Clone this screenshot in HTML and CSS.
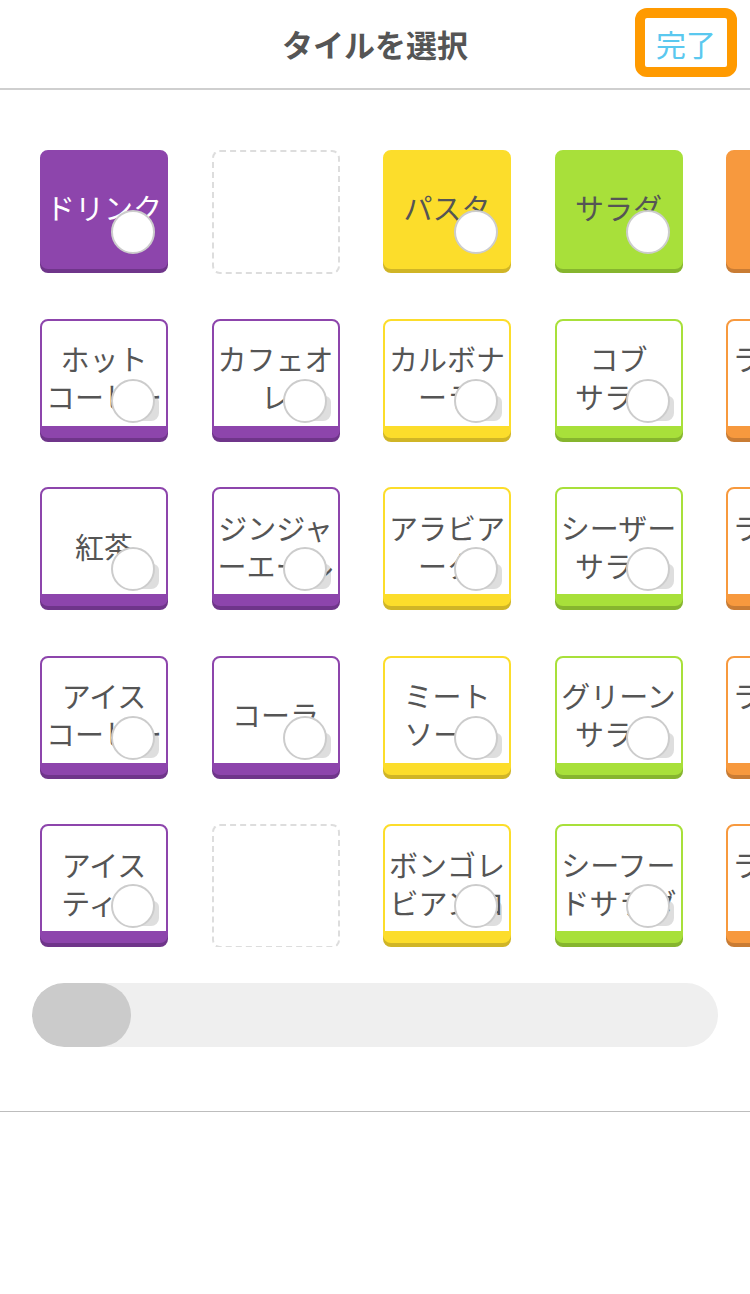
FILE: index.html
```html
<!DOCTYPE html>
<html lang="ja">

<head>
    <meta charset="UTF-8">
    <meta name="viewport" content="width=device-width, initial-scale=1.0">
    <title>タイルを選択</title>
    <link rel="stylesheet" href="styles.css">
</head>

<body>
    <header class="header">
        <div></div>
        <h1 class="title">タイルを選択</h1>
        <button class="done">完了</button>
    </header>
    <main class="picker">
        <div class="board">
            <!-- row 1: categories -->
            <div class="tile purple solid light"><span class="label">ドリンク</span><span class="knob"></span></div>
            <div class="slot"></div>
            <div class="tile yellow solid"><span class="label">パスタ</span><span class="knob"></span></div>
            <div class="tile green solid"><span class="label">サラダ</span><span class="knob"></span></div>
            <div class="tile orange solid light"><span class="label">ライス</span><span class="knob"></span></div>

            <!-- row 2 -->
            <div class="tile purple"><span class="knob-shadow"></span><span class="label">ホット<br>コーヒー</span><span class="knob"></span></div>
            <div class="tile purple"><span class="knob-shadow"></span><span class="label">カフェオ<br>レ</span><span class="knob"></span></div>
            <div class="tile yellow"><span class="knob-shadow"></span><span class="label">カルボナ<br>ーラ</span><span class="knob"></span></div>
            <div class="tile green"><span class="knob-shadow"></span><span class="label">コブ<br>サラダ</span><span class="knob"></span></div>
            <div class="tile orange"><span class="knob-shadow"></span><span class="label">ライス大<br>盛り</span><span class="knob"></span></div>

            <!-- row 3 -->
            <div class="tile purple"><span class="knob-shadow"></span><span class="label">紅茶</span><span class="knob"></span></div>
            <div class="tile purple"><span class="knob-shadow"></span><span class="label">ジンジャ<br>ーエール</span><span class="knob"></span></div>
            <div class="tile yellow"><span class="knob-shadow"></span><span class="label">アラビア<br>ータ</span><span class="knob"></span></div>
            <div class="tile green"><span class="knob-shadow"></span><span class="label">シーザー<br>サラダ</span><span class="knob"></span></div>
            <div class="tile orange"><span class="knob-shadow"></span><span class="label">ライス小<br>盛り</span><span class="knob"></span></div>

            <!-- row 4 -->
            <div class="tile purple"><span class="knob-shadow"></span><span class="label">アイス<br>コーヒー</span><span class="knob"></span></div>
            <div class="tile purple"><span class="knob-shadow"></span><span class="label">コーラ</span><span class="knob"></span></div>
            <div class="tile yellow"><span class="knob-shadow"></span><span class="label">ミート<br>ソース</span><span class="knob"></span></div>
            <div class="tile green"><span class="knob-shadow"></span><span class="label">グリーン<br>サラダ</span><span class="knob"></span></div>
            <div class="tile orange"><span class="knob-shadow"></span><span class="label">ライス普<br>通</span><span class="knob"></span></div>

            <!-- row 5 -->
            <div class="tile purple"><span class="knob-shadow"></span><span class="label">アイス<br>ティー</span><span class="knob"></span></div>
            <div class="slot"></div>
            <div class="tile yellow"><span class="knob-shadow"></span><span class="label">ボンゴレ<br>ビアンコ</span><span class="knob"></span></div>
            <div class="tile green"><span class="knob-shadow"></span><span class="label">シーフー<br>ドサラダ</span><span class="knob"></span></div>
            <div class="tile orange"><span class="knob-shadow"></span><span class="label">ラージサ<br>イズ</span><span class="knob"></span></div>
        </div>

        <div class="scrollbar">
            <div class="thumb"></div>
        </div>
    </main>
    <div class="footer-line"></div>
</body>

</html>
```

FILE: styles.css
```css
body {
    font-family: "Noto Sans CJK JP", "Noto Sans", sans-serif;
    margin: 0;
    padding: 0;
    background-color: #fff;
    color: #555;
    overflow: hidden;
}

.header {
    display: grid;
    grid-template-columns: 1fr auto 1fr;
    align-items: center;
    height: 88px;
    border-bottom: 2px solid #cfcfcf;
}

.title {
    margin: 0 0 2px 0;
    font-size: 31px;
    font-weight: bold;
    color: #555;
}

.done {
    justify-self: end;
    align-self: start;
    margin: 8px 13px 0 0;
    width: 102px;
    height: 69px;
    box-sizing: border-box;
    border: 10px solid #ff9a00;
    border-radius: 12px;
    background-color: #fff;
    color: #5ac8ef;
    font-family: inherit;
    font-size: 30px;
    padding: 0;
    line-height: 1;
}

.picker {
    padding-top: 60px;
}

.board {
    display: grid;
    grid-template-columns: repeat(5, 128px);
    grid-auto-rows: 123px;
    column-gap: 43.5px;
    row-gap: 45.5px;
    padding-left: 40px;
    overflow: hidden;
}

.tile {
    position: relative;
    width: 128px;
    height: 119px;
    box-sizing: border-box;
    border: 2px solid;
    border-bottom-width: 12px;
    border-radius: 8px;
    background-color: #fff;
    display: flex;
    align-items: center;
    justify-content: center;
}

.tile.solid {
    border-bottom-width: 2px;
}

.tile .label {
    position: relative;
    z-index: 1;
    font-size: 29px;
    line-height: 38px;
    text-align: center;
    white-space: nowrap;
    padding-top: 8px;
    color: #555;
}

.tile.solid .label {
    padding-top: 0;
    margin-top: -5px;
}

.tile.light .label {
    color: #fff;
}

.purple {
    border-color: #8d45ac;
    box-shadow: 0 4px 0 #6f358a;
}

.purple.solid {
    background-color: #8d45ac;
}

.yellow {
    border-color: #fcdd2b;
    box-shadow: 0 4px 0 #d0b526;
}

.yellow.solid {
    background-color: #fcdd2b;
}

.green {
    border-color: #a8e03a;
    box-shadow: 0 4px 0 #86b52e;
}

.green.solid {
    background-color: #a8e03a;
}

.orange {
    border-color: #f7993e;
    box-shadow: 0 4px 0 #c97c34;
}

.orange.solid {
    background-color: #f7993e;
}

.knob {
    position: absolute;
    z-index: 2;
    left: 69px;
    top: 58px;
    width: 44px;
    height: 44px;
    box-sizing: border-box;
    border: 2px solid #cccccc;
    border-radius: 50%;
    background-color: #fff;
}

.knob-shadow {
    position: absolute;
    z-index: 0;
    left: 93px;
    top: 75px;
    width: 24px;
    height: 25px;
    border-radius: 4px 6px 8px 4px;
    background-color: #dedede;
}

.slot {
    width: 128px;
    height: 124px;
    box-sizing: border-box;
    border: 2px dashed #dddddd;
    border-radius: 8px;
}

.scrollbar {
    margin: 36px 32px 0 32px;
    height: 64px;
    border-radius: 32px;
    background-color: #efefef;
    overflow: hidden;
}

.thumb {
    width: 99px;
    height: 100%;
    border-radius: 32px;
    background-color: #cbcbcb;
}

.footer-line {
    margin-top: 64px;
    border-top: 1px solid #bdbdbd;
}
```
